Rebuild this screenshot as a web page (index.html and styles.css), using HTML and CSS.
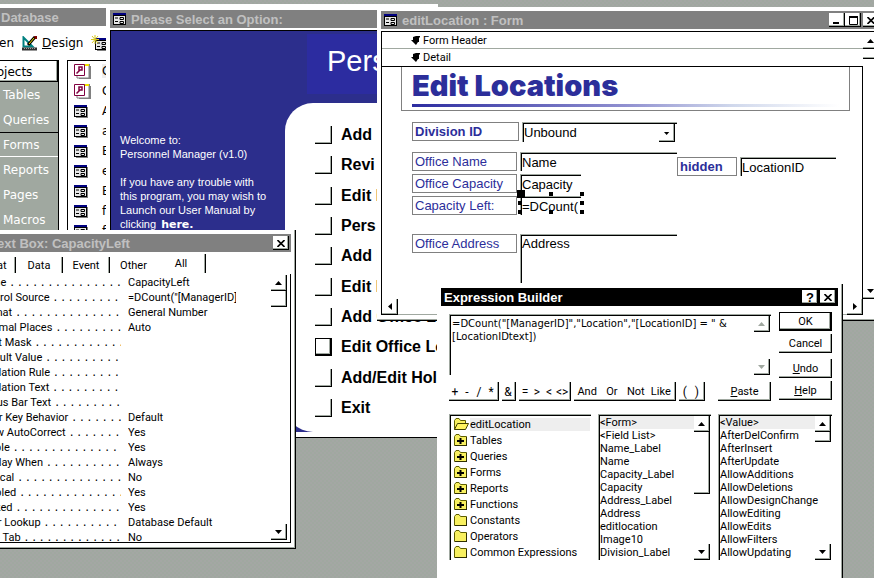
FILE: index.html
```
<!DOCTYPE html>
<html lang="en">

<head>
    <meta charset="UTF-8">
    <meta name="viewport" content="width=device-width, initial-scale=1.0">
    <title>Expression Builder</title>
    <link rel="stylesheet" href="styles.css">
</head>

<body>

    <svg class="sprite" aria-hidden="true">
        <symbol id="form" viewBox="0 0 14 13">
            <path d="M2 2H14V13H2Z" fill="#808080" />
            <path d="M0 0H13V12H0Z" fill="#000" />
            <path d="M1 3H12V11H1Z" fill="#e8e8e8" />
            <path d="M0 0H13V2H0Z" fill="#000080" />
            <path d="M2 5H5M2 8.5H5M7 4.5H10.500V6.500H7ZM7 8.500H10.500V10.500H7Z" fill="none" stroke="#000" />
        </symbol>
        <symbol id="wizard" viewBox="0 0 17 16">
            <path d="M5 1H16V3H17V16H5Z" fill="#808080" />
            <path d="M3 2H15V15H3Z" fill="#fff" stroke="#808080" />
            <path d="M4 1H15V3H4Z" fill="#f4e400" />
            <path d="M.5 1.500H10.500V12.500H.5Z" fill="#fff" stroke="#800040" />
            <path d="M2.500 10.500L6 7M5 4H8V7H5Z" fill="none" stroke="#800040" stroke-width="1.500" />
        </symbol>
        <symbol id="up" viewBox="0 0 8 4"><path d="M0 4H7L3.500 0Z" /></symbol>
        <symbol id="down" viewBox="0 0 8 4"><path d="M0 0H7L3.500 4Z" /></symbol>
        <symbol id="left" viewBox="0 0 4 8"><path d="M4 0V7L0 3.500Z" /></symbol>
        <symbol id="right" viewBox="0 0 4 8"><path d="M0 0V7L4 3.500Z" /></symbol>
        <symbol id="close" viewBox="0 0 8 7"><path d="M.5 0L7.500 7M7.500 0L.5 7" stroke="#000" stroke-width="1.600" /></symbol>
        <symbol id="section" viewBox="0 0 10 9"><path d="M2 1L5 0H9V1L8 2V6H7L5 9L0 4H2Z" /></symbol>
        <symbol id="folder" viewBox="0 0 13 12">
            <path d="M.5 11.500V2.500L2 .5H5L6.500 2.500H12.500V11.500Z" fill="#f8f060" stroke="#606000" />
            <path d="M1 12H13V3" fill="none" stroke="#000" />
        </symbol>
        <symbol id="folder-plus" viewBox="0 0 13 12">
            <use href="#folder" />
            <path d="M3 7H10M6.500 4V10" stroke="#000" stroke-width="2" />
        </symbol>
        <symbol id="folder-open" viewBox="0 0 15 12">
            <path d="M.5 11.500V2.500L2 .5H5L6.500 2.500H11.500V5" fill="#f8f060" stroke="#606000" />
            <path d="M.5 11.500L3.500 5.500H14.500L11.500 11.500Z" fill="#fff460" stroke="#404000" />
        </symbol>
    </svg>

    <main class="desktop">

        <section class="window database">
            <h2 class="title-bar">Database</h2>
            <div class="toolbar">
                <button class="tool open"><span>Open</span></button>
                <button class="tool">
                    <svg width="16" height="15" viewBox="0 0 16 15">
                        <path d="M1.500 1.500V10.500H10.500Z" fill="#fff" stroke="#008080" stroke-width="2" />
                        <path d="M6 9L13 1" stroke="#000" stroke-width="3" />
                        <path d="M7 8L12 2" stroke="#f4e400" />
                        <path d="M12 0H15V3H13Z" fill="#800000" />
                        <path d="M0 11.500H15V14.500H0Z" fill="#303030" />
                        <path d="M2 12.500H14" stroke="#a0a0a0" stroke-dasharray="1 1" />
                    </svg>
                    <span><u>D</u>esign</span>
                </button>
                <button class="tool" aria-label="New">
                    <svg width="18" height="16" viewBox="0 0 18 16">
                        <use href="#form" x="4" y="3" width="14" height="13" />
                        <path d="M4 0V9M0 4.500H8M1 1L7 8M7 1L1 8" stroke="#d8c820" />
                    </svg>
                </button>
            </div>
            <div class="db-body">
                <nav class="objects">
                    <button class="heading">Objects</button>
                    <button>Tables</button>
                    <button>Queries</button>
                    <button class="pressed">Forms</button>
                    <button>Reports</button>
                    <button>Pages</button>
                    <button>Macros</button>
                </nav>
                <ul class="form-list">
                    <li class="selected"><svg width="17" height="16"><use href="#wizard" /></svg><span>C</span></li>
                    <li><svg width="17" height="16"><use href="#wizard" /></svg><span>C</span></li>
                    <li><svg width="14" height="13"><use href="#form" /></svg><span>A</span></li>
                    <li><svg width="14" height="13"><use href="#form" /></svg><span>a</span></li>
                    <li><svg width="14" height="13"><use href="#form" /></svg><span>E</span></li>
                    <li><svg width="14" height="13"><use href="#form" /></svg><span>e</span></li>
                    <li><svg width="14" height="13"><use href="#form" /></svg><span>E</span></li>
                    <li><svg width="14" height="13"><use href="#form" /></svg><span>f</span></li>
                    <li><svg width="14" height="13"><use href="#form" /></svg><span>f</span></li>
                </ul>
            </div>
        </section>

        <section class="window launcher">
            <h2 class="title-bar"><svg width="14" height="13"><use href="#form" /></svg>Please Select an Option:</h2>
            <div class="launcher-body">
                <div class="welcome">
                    <p>Welcome to:<br>Personnel Manager (v1.0)</p>
                    <p>If you have any trouble with<br>this program, you may wish to<br>Launch our User Manual by<br>clicking <a href="#">here.</a></p>
                </div>
                <div class="menu">
                    <h1>Pers</h1>
                    <div class="options">
                        <button><i></i>Add</button>
                        <button><i></i>Revi</button>
                        <button><i></i>Edit L</button>
                        <button><i></i>Pers</button>
                        <button><i></i>Add L</button>
                        <button><i></i>Edit L</button>
                        <button><i></i>Add Office Lo</button>
                        <button class="focused"><i></i>Edit Office Lo</button>
                        <button><i></i>Add/Edit Holi</button>
                        <button><i></i>Exit</button>
                    </div>
                </div>
            </div>
        </section>

        <section class="window editor">
            <h2 class="title-bar">
                <svg width="14" height="13"><use href="#form" /></svg>editLocation : Form
                <span class="controls">
                    <button aria-label="Minimize"><svg width="8" height="8"><path d="M0 6H6V8H0Z" /></svg></button>
                    <button aria-label="Maximize"><svg width="9" height="9"><path d="M.5 1H8.500V8.500H.5Z" fill="none" stroke="#000" /><path d="M0 0H9V2H0Z" /></svg></button>
                    <button class="apart" aria-label="Close"><svg width="8" height="7"><use href="#close" /></svg></button>
                </span>
            </h2>
            <div class="editor-body">
                <div class="design">
                    <div class="band"><svg width="10" height="9"><use href="#section" /></svg>Form Header</div>
                    <div class="band detail"><svg width="10" height="9"><use href="#section" /></svg>Detail</div>
                    <div class="canvas">
                        <div class="banner">
                            <h1>Edit Locations</h1>
                            <hr>
                        </div>
                        <div class="fields">
                            <div class="column">
                                <div class="field division">
                                    <label for="division">Division ID</label>
                                    <div class="combo">
                                        <input id="division" value="Unbound">
                                        <button class="scroll-btn" aria-label="Open list"><svg width="6" height="3"><use href="#down" /></svg></button>
                                    </div>
                                </div>
                                <div class="field"><label for="name">Office Name</label><input id="name" value="Name"></div>
                                <div class="field"><label for="capacity">Office Capacity</label><input id="capacity" class="short" value="Capacity"></div>
                                <div class="field">
                                    <label for="left">Capacity Left:</label>
                                    <div class="selection">
                                        <input id="left" class="short" value="=DCount(">
                                        <i class="handle move"></i><i class="handle n"></i><i class="handle ne"></i><i class="handle w"></i>
                                        <i class="handle e"></i><i class="handle sw"></i><i class="handle s"></i><i class="handle se"></i>
                                    </div>
                                </div>
                                <div class="field address"><label for="address">Office Address</label><textarea id="address">Address</textarea></div>
                            </div>
                            <div class="field hidden-field"><label for="location">hidden</label><input id="location" value="LocationID"></div>
                        </div>
                    </div>
                    <div class="h-scroll">
                        <button class="scroll-btn" aria-label="Scroll left"><svg width="4" height="8"><use href="#left" /></svg></button>
                        <button class="scroll-btn" aria-label="Scroll right"><svg width="4" height="8"><use href="#right" /></svg></button>
                    </div>
                </div>
                <div class="v-scroll">
                    <button class="scroll-btn" aria-label="Scroll up"><svg width="8" height="4"><use href="#up" /></svg></button>
                    <div class="thumb small"></div>
                    <button class="scroll-btn last" aria-label="Scroll down"><svg width="8" height="4"><use href="#down" /></svg></button>
                </div>
            </div>
        </section>

        <section class="window properties">
            <h2 class="title-bar">Text Box: CapacityLeft
                <span class="controls"><button aria-label="Close"><svg width="8" height="7"><use href="#close" /></svg></button></span>
            </h2>
            <div class="tabs">
                <button>Format</button>
                <button>Data</button>
                <button>Event</button>
                <button>Other</button>
                <button class="active">All</button>
            </div>
            <div class="sheet">
                <div class="rows">
                    <div class="row"><label for="p1">Name</label><span class="dots">. . . . . . . . . . . . . . . . . . . .</span><input id="p1" value="CapacityLeft"></div>
                    <div class="row"><label for="p2">Control Source</label><span class="dots">. . . . . . . . . . . . . . . . . . . .</span><input id="p2" value="=DCount(&quot;[ManagerID]"></div>
                    <div class="row"><label for="p3">Format</label><span class="dots">. . . . . . . . . . . . . . . . . . . .</span><input id="p3" value="General Number"></div>
                    <div class="row"><label for="p4">Decimal Places</label><span class="dots">. . . . . . . . . . . . . . . . . . . .</span><input id="p4" value="Auto"></div>
                    <div class="row"><label for="p5">Input Mask</label><span class="dots">. . . . . . . . . . . . . . . . . . . .</span><input id="p5"></div>
                    <div class="row"><label for="p6">Default Value</label><span class="dots">. . . . . . . . . . . . . . . . . . . .</span><input id="p6"></div>
                    <div class="row"><label for="p7">Validation Rule</label><span class="dots">. . . . . . . . . . . . . . . . . . . .</span><input id="p7"></div>
                    <div class="row"><label for="p8">Validation Text</label><span class="dots">. . . . . . . . . . . . . . . . . . . .</span><input id="p8"></div>
                    <div class="row"><label for="p9">Status Bar Text</label><span class="dots">. . . . . . . . . . . . . . . . . . . .</span><input id="p9"></div>
                    <div class="row"><label for="p10">Enter Key Behavior</label><span class="dots">. . . . . . . . . . . . . . . . . . . .</span><input id="p10" value="Default"></div>
                    <div class="row"><label for="p11">Allow AutoCorrect</label><span class="dots">. . . . . . . . . . . . . . . . . . . .</span><input id="p11" value="Yes"></div>
                    <div class="row"><label for="p12">Visible</label><span class="dots">. . . . . . . . . . . . . . . . . . . .</span><input id="p12" value="Yes"></div>
                    <div class="row"><label for="p13">Display When</label><span class="dots">. . . . . . . . . . . . . . . . . . . .</span><input id="p13" value="Always"></div>
                    <div class="row"><label for="p14">Vertical</label><span class="dots">. . . . . . . . . . . . . . . . . . . .</span><input id="p14" value="No"></div>
                    <div class="row"><label for="p15">Enabled</label><span class="dots">. . . . . . . . . . . . . . . . . . . .</span><input id="p15" value="Yes"></div>
                    <div class="row"><label for="p16">Locked</label><span class="dots">. . . . . . . . . . . . . . . . . . . .</span><input id="p16" value="Yes"></div>
                    <div class="row"><label for="p17">Filter Lookup</label><span class="dots">. . . . . . . . . . . . . . . . . . . .</span><input id="p17" value="Database Default"></div>
                    <div class="row"><label for="p18">Auto Tab</label><span class="dots">. . . . . . . . . . . . . . . . . . . .</span><input id="p18" value="No"></div>
                </div>
                <div class="v-scroll">
                    <button class="scroll-btn" aria-label="Scroll up"><svg width="8" height="4"><use href="#up" /></svg></button>
                    <div class="thumb"></div>
                    <button class="scroll-btn last" aria-label="Scroll down"><svg width="8" height="4"><use href="#down" /></svg></button>
                </div>
            </div>
        </section>

        <section class="window builder">
            <h2 class="title-bar active">Expression Builder
                <span class="controls">
                    <button aria-label="What's this">?</button>
                    <button class="apart" aria-label="Close"><svg width="8" height="7"><use href="#close" /></svg></button>
                </span>
            </h2>
            <div class="builder-body">
                <div class="top">
                    <div class="main">
                        <div class="expression">
                            <textarea aria-label="Expression">=DCount("[ManagerID]","Location","[LocationID] = " &amp; [LocationIDtext])</textarea>
                            <div class="v-scroll">
                                <button class="scroll-btn" disabled aria-label="Scroll up"><svg width="8" height="4"><use href="#up" /></svg></button>
                                <button class="scroll-btn last" disabled aria-label="Scroll down"><svg width="8" height="4"><use href="#down" /></svg></button>
                            </div>
                        </div>
                        <div class="operators">
                            <div class="group"><button>+</button><button>-</button><button>/</button><button>*</button></div>
                            <div class="group"><button>&amp;</button></div>
                            <div class="group"><button>=</button><button>&gt;</button><button>&lt;</button><button>&lt;&gt;</button></div>
                            <div class="group words"><button>And</button><button>Or</button><button>Not</button><button>Like</button></div>
                            <div class="group"><button>(</button><button>)</button></div>
                            <button class="push paste"><u>P</u>aste</button>
                        </div>
                    </div>
                    <div class="actions">
                        <button class="push default">OK</button>
                        <button class="push">Cancel</button>
                        <button class="push undo"><u>U</u>ndo</button>
                        <button class="push"><u>H</u>elp</button>
                    </div>
                </div>
                <div class="lists">
                    <ul class="list tree">
                        <li class="selected"><svg width="15" height="12"><use href="#folder-open" /></svg><span>editLocation</span></li>
                        <li><svg width="13" height="12"><use href="#folder-plus" /></svg><span>Tables</span></li>
                        <li><svg width="13" height="12"><use href="#folder-plus" /></svg><span>Queries</span></li>
                        <li><svg width="13" height="12"><use href="#folder-plus" /></svg><span>Forms</span></li>
                        <li><svg width="13" height="12"><use href="#folder-plus" /></svg><span>Reports</span></li>
                        <li><svg width="13" height="12"><use href="#folder-plus" /></svg><span>Functions</span></li>
                        <li><svg width="13" height="12"><use href="#folder" /></svg><span>Constants</span></li>
                        <li><svg width="13" height="12"><use href="#folder" /></svg><span>Operators</span></li>
                        <li><svg width="13" height="12"><use href="#folder" /></svg><span>Common Expressions</span></li>
                    </ul>
                    <div class="list">
                        <ul>
                            <li class="selected">&lt;Form&gt;</li>
                            <li>&lt;Field List&gt;</li>
                            <li>Name_Label</li>
                            <li>Name</li>
                            <li>Capacity_Label</li>
                            <li>Capacity</li>
                            <li>Address_Label</li>
                            <li>Address</li>
                            <li>editlocation</li>
                            <li>Image10</li>
                            <li>Division_Label</li>
                        </ul>
                        <div class="v-scroll">
                            <button class="scroll-btn" aria-label="Scroll up"><svg width="8" height="4"><use href="#up" /></svg></button>
                            <div class="thumb large"></div>
                            <button class="scroll-btn last" aria-label="Scroll down"><svg width="8" height="4"><use href="#down" /></svg></button>
                        </div>
                    </div>
                    <div class="list">
                        <ul>
                            <li class="selected">&lt;Value&gt;</li>
                            <li>AfterDelConfirm</li>
                            <li>AfterInsert</li>
                            <li>AfterUpdate</li>
                            <li>AllowAdditions</li>
                            <li>AllowDeletions</li>
                            <li>AllowDesignChange</li>
                            <li>AllowEditing</li>
                            <li>AllowEdits</li>
                            <li>AllowFilters</li>
                            <li>AllowUpdating</li>
                        </ul>
                        <div class="v-scroll">
                            <button class="scroll-btn" aria-label="Scroll up"><svg width="8" height="4"><use href="#up" /></svg></button>
                            <div class="thumb small"></div>
                            <button class="scroll-btn last" aria-label="Scroll down"><svg width="8" height="4"><use href="#down" /></svg></button>
                        </div>
                    </div>
                </div>
            </div>
        </section>

    </main>

</body>

</html>
```
FILE: styles.css
```
* {
    margin: 0;
    padding: 0;
    box-sizing: border-box;
}

:root {
    --gray: #a0a8a0;
    --blue: #2c2e9a;
}

body {
    font-family: Roboto, sans-serif;
    font-size: 11px;
    color: #000;
}

button,
input,
textarea {
    font: inherit;
    color: inherit;
    background: none;
    border: none;
    border-radius: 0;
    outline: none;
    resize: none;
}

ul {
    list-style: none;
}

svg {
    display: block;
    flex: none;
}

.sprite {
    position: absolute;
    width: 0;
    height: 0;
}

.desktop {
    position: relative;
    height: 100vh;
    overflow: hidden;
    background: repeating-conic-gradient(#a0a8a0 0 25%, #a4a7a4 0 50%) 0 0 / 4px 4px;
}

/* windows */
.window {
    position: absolute;
    background: #fff;
    display: flex;
    flex-direction: column;
}

.title-bar {
    display: flex;
    align-items: center;
    gap: 4px;
    flex: none;
    height: 18px;
    padding: 0 2px 0 3px;
    background: #808080;
    color: #c0c0c0;
    font-family: "Liberation Sans", sans-serif;
    font-size: 13px;
    font-weight: bold;
    white-space: nowrap;
}

.title-bar.active {
    background: #000;
    color: #fff;
}

.controls {
    display: flex;
    margin-left: auto;
    color: #000;
}

.controls button {
    display: flex;
    align-items: center;
    justify-content: center;
    width: 16px;
    height: 14px;
    background: #fff;
    box-shadow: inset -1px -1px #000, inset -2px -2px var(--gray);
}

.controls .apart {
    margin-left: 2px;
}

.scroll-btn {
    display: flex;
    align-items: center;
    justify-content: center;
    flex: none;
    width: 16px;
    height: 16px;
    background: #fff;
    box-shadow: inset -1px -1px #000, inset -2px -2px var(--gray);
}

.scroll-btn:disabled {
    fill: var(--gray);
}

.v-scroll {
    display: flex;
    flex-direction: column;
    flex: none;
    width: 16px;
}

.last {
    margin-top: auto;
}

.thumb {
    height: 16px;
    box-shadow: inset -1px -1px #000, inset -2px -2px var(--gray);
}

.thumb.small {
    height: 10px;
}

.thumb.large {
    height: 62px;
}

/* database window */
.database {
    left: -40px;
    top: 4px;
    width: 146px;
    height: 226px;
    padding-top: 4px;
    overflow: hidden;
    font-family: "DejaVu Sans", sans-serif;
}

.database .title-bar {
    padding-left: 41px;
}

.toolbar {
    display: flex;
    align-items: center;
    gap: 8px;
    flex: none;
    height: 34px;
    padding-left: 22px;
}

.tool {
    display: flex;
    align-items: center;
    gap: 4px;
    font-size: 12px;
}

.tool.open {
    width: 32px;
    justify-content: flex-end;
}

.db-body {
    display: flex;
    flex: 1;
    gap: 8px;
    min-height: 0;
    overflow: hidden;
}

.objects {
    display: flex;
    flex-direction: column;
    flex: none;
    width: 99px;
    background: var(--gray);
    border-top: 1px solid #000;
    border-right: 1px solid #000;
}

.objects button {
    flex: none;
    height: 25px;
    padding-left: 43px;
    text-align: left;
    font-size: 12px;
    color: #fff;
}

.objects .heading {
    height: 21px;
    padding-left: 27px;
    color: #000;
    background: #fff;
    box-shadow: inset -1px -1px #000, inset -2px -2px var(--gray);
}

.objects .pressed {
    border-top: 1px solid #000;
    border-bottom: 1px solid #fff;
}

.form-list {
    flex: 1;
    border-top: 1px solid #000;
    border-left: 1px solid #000;
    font-size: 12px;
}

.form-list li {
    display: grid;
    grid-template-columns: 28px 1fr;
    align-items: center;
    height: 20px;
    padding-left: 6px;
}

.form-list .selected span {
    background: #eee;
}

/* launcher */
.launcher {
    left: 106px;
    top: 4px;
    width: 332px;
    height: 434px;
    padding: 6px 0 5px 4px;
    border-bottom: 1px solid #000;
}

.launcher-body {
    display: flex;
    flex: 1;
    margin-top: 2px;
    border-top: 1px solid #000;
    border-left: 1px solid #000;
    background: #2c2e8c;
}

.welcome {
    width: 174px;
    padding: 102px 0 0 9px;
    color: #fff;
    font-family: "Liberation Sans", sans-serif;
    line-height: 14px;
    white-space: nowrap;
}

.welcome p {
    margin-bottom: 14px;
}

.welcome a {
    margin-left: 2px;
    color: #fff;
    font-weight: bold;
    font-family: "DejaVu Sans", sans-serif;
    text-decoration: none;
}

.menu {
    display: flex;
    flex-direction: column;
    flex: 1;
    overflow: hidden;
    font-family: "Liberation Sans", sans-serif;
}

.menu h1 {
    height: 60px;
    margin: 3px 0 9px 22px;
    padding-left: 20px;
    background: #2c2ca0;
    color: #fff;
    font-size: 29px;
    font-weight: normal;
    line-height: 54px;
}

.options {
    display: flex;
    flex-direction: column;
    justify-content: space-between;
    flex: 1;
    padding: 22px 0 14px 30px;
    background: #fff;
    border-radius: 28px 0 0 28px;
}

.options button {
    display: flex;
    align-items: center;
    gap: 9px;
    font-size: 16px;
    font-weight: bold;
    line-height: 20px;
    white-space: nowrap;
}

.options i {
    flex: none;
    width: 17px;
    height: 18px;
    box-shadow: inset -1px -1px #000, inset -2px -2px var(--gray);
}

.options .focused i {
    border: 1px solid #000;
}

/* form in design view */
.editor {
    left: 377px;
    top: 7px;
    width: 506px;
    height: 314px;
    padding: 4px 4px 5px;
    border-bottom: 1px solid #000;
    box-shadow: inset 0 -1px var(--gray);
}

.editor .title-bar {
    padding-right: 0;
}

.editor-body {
    display: flex;
    flex: 1;
    margin-top: 2px;
    border-top: 1px solid #000;
    border-left: 1px solid #000;
}

.editor-body > .v-scroll {
    padding: 1px 0 16px;
}

.design {
    display: flex;
    flex-direction: column;
    flex: 1;
}

.band {
    display: flex;
    align-items: center;
    gap: 2px;
    height: 17px;
    padding-left: 29px;
    border-bottom: 1px solid var(--gray);
}

.band.detail {
    height: 18px;
    border-color: #000;
}

.canvas {
    flex: 1;
    padding-left: 19px;
    border-right: 1px solid #000;
    font-family: "Liberation Sans", sans-serif;
    font-size: 13px;
}

.banner {
    height: 44px;
    margin-right: 12px;
    padding: 3px 10px 0;
    border: 1px solid #808080;
    border-top: none;
}

.banner h1 {
    color: var(--blue);
    font-family: Inter, sans-serif;
    font-size: 29px;
    font-weight: 900;
    line-height: 32px;
    white-space: nowrap;
}

.banner hr {
    height: 3px;
    margin-top: 2px;
    border: none;
    background: linear-gradient(to right, #2c2ca0, #9090d0 50%, #d0d8ec 75%, #fff);
}

.fields {
    display: flex;
    padding: 11px 0 0 11px;
}

.column {
    display: flex;
    flex-direction: column;
    gap: 3px;
    flex: none;
    width: 265px;
}

.field {
    display: flex;
    align-items: flex-start;
    gap: 3px;
}

.field label {
    flex: none;
    width: 105px;
    height: 19px;
    padding-left: 2px;
    border: 1px solid #808080;
    color: var(--blue);
    line-height: 17px;
    white-space: nowrap;
}

.field input,
.field textarea {
    flex: 1;
    min-width: 0;
    height: 19px;
    padding: 2px 0 0 2px;
    box-shadow: inset 1px 1px var(--gray), inset 2px 2px #000;
}

.field .short {
    flex: none;
    width: 61px;
}

.field textarea {
    height: 49px;
}

.division {
    margin-bottom: 7px;
}

.division label,
.hidden-field label {
    font-weight: bold;
}

.division label {
    width: 107px;
}

.combo {
    display: flex;
    flex: 1;
    min-width: 0;
    padding: 2px 2px 0 0;
    box-shadow: inset 1px 1px var(--gray), inset 2px 2px #000;
}

.combo input {
    height: 17px;
    padding-top: 0;
    box-shadow: none;
}

.combo .scroll-btn {
    height: 18px;
}

.address {
    margin-top: 16px;
}

.hidden-field {
    padding-top: 35px;
}

.hidden-field label {
    width: 60px;
}

.hidden-field input {
    flex: none;
    width: 96px;
}

.selection {
    position: relative;
    height: 19px;
}

.handle {
    position: absolute;
    width: 4px;
    height: 4px;
    background: #000;
}

.move {
    left: -3px;
    top: -6px;
    width: 8px;
    height: 8px;
}

.n {
    left: 29px;
    top: -4px;
}

.ne {
    left: 60px;
    top: -4px;
}

.w {
    left: -2px;
    top: 5px;
}

.e {
    left: 60px;
    top: 5px;
}

.sw {
    left: -2px;
    top: 14px;
}

.s {
    left: 29px;
    top: 14px;
}

.se {
    left: 60px;
    top: 14px;
}

.h-scroll {
    display: flex;
    justify-content: space-between;
    height: 16px;
    border-bottom: 1px solid var(--gray);
}

/* property sheet */
.properties {
    left: -40px;
    top: 230px;
    width: 336px;
    height: 319px;
    padding: 4px 4px 5px 0;
    border-right: 1px solid #000;
    border-bottom: 1px solid #000;
    box-shadow: inset -1px -1px var(--gray);
}

.properties .title-bar {
    padding-left: 30px;
}

.tabs {
    display: flex;
    flex: none;
    height: 20px;
    margin-top: 2px;
    padding-left: 3px;
}

.tabs button {
    width: 47px;
    height: 16px;
    margin-top: 3px;
    border-right: 1px solid #000;
    box-shadow: inset -1px 0 var(--gray);
}

.tabs button:first-child {
    width: 53px;
}

.tabs button:nth-child(4) {
    border: none;
    box-shadow: none;
}

.tabs .active {
    width: 49px;
    height: 19px;
    margin-top: 0;
}

.sheet {
    display: flex;
    justify-content: space-between;
    flex: 1;
    min-height: 0;
    padding: 1px 3px 2px 17px;
    border-right: 1px solid #000;
    border-bottom: 1px solid #000;
}

.rows {
    width: 259px;
}

.row {
    display: flex;
    gap: 4px;
    height: 15px;
    line-height: 15px;
    white-space: nowrap;
}

.dots {
    flex: 1;
    min-width: 0;
    overflow: hidden;
    font-family: "DejaVu Sans", sans-serif;
    font-size: 12px;
}

.row input {
    width: 108px;
    height: 15px;
    margin-left: 3px;
}

/* expression builder */
.builder {
    left: 437px;
    top: 284px;
    width: 406px;
    height: 300px;
    padding: 4px 4px 0;
    border-right: 1px solid #000;
    box-shadow: inset -1px 0 var(--gray);
}

.builder-body {
    display: flex;
    flex-direction: column;
    gap: 13px;
    padding: 6px 6px 0 8px;
}

.top {
    display: flex;
    gap: 8px;
}

.main {
    display: flex;
    flex-direction: column;
    flex: 1;
}

.expression {
    display: flex;
    height: 61px;
    margin-top: 2px;
    padding: 2px 1px 0 2px;
    box-shadow: inset 1px 1px var(--gray), inset 2px 2px #000;
}

.expression textarea {
    flex: 1;
    padding: 1px 0 0 1px;
    font-family: "DejaVu Sans", sans-serif;
    font-size: 10px;
    line-height: 13px;
    overflow: hidden;
}

.operators {
    display: flex;
    gap: 3px;
    height: 19px;
    margin-top: 7px;
}

.group {
    display: flex;
    padding-right: 2px;
    box-shadow: inset -1px -1px #000, inset -2px -2px var(--gray);
}

.group button {
    min-width: 12px;
    padding: 0 1px;
    font-size: 12px;
}

.words button {
    min-width: 24px;
    padding: 0 3px;
    font-size: 11px;
}

.push {
    height: 19px;
    box-shadow: inset -1px -1px #000, inset -2px -2px var(--gray);
}

.paste {
    width: 53px;
    margin-left: auto;
}

.actions {
    display: flex;
    flex-direction: column;
    gap: 3px;
    width: 53px;
}

.push.default {
    border: 1px solid #000;
}

.undo {
    margin-top: 3px;
}

.lists {
    display: grid;
    grid-template-columns: 142px 113px 114px;
    justify-content: space-between;
}

.list {
    display: flex;
    min-width: 0;
    height: 146px;
    padding: 2px 1px 0 2px;
    line-height: 13px;
    white-space: nowrap;
    box-shadow: inset 1px 1px var(--gray), inset 2px 2px #000;
}

.list ul {
    flex: 1;
    min-width: 0;
}

.list .selected {
    background: #eee;
}

.tree {
    flex-direction: column;
}

.tree li {
    display: grid;
    grid-template-columns: 16px 1fr;
    align-items: center;
    height: 16px;
    padding-left: 3px;
}

.tree .selected {
    background: none;
}

.tree .selected span {
    background: #eee;
}
```
